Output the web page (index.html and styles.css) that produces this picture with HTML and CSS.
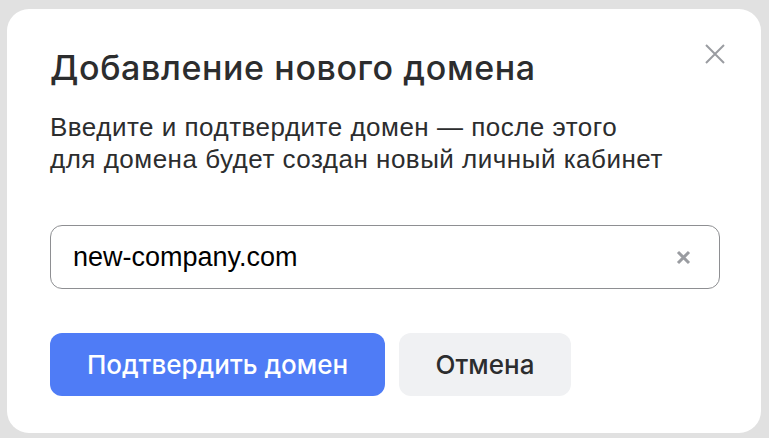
FILE: index.html
```html
<!DOCTYPE html>
<html lang="ru">
<head>
<meta charset="utf-8">
<link rel="stylesheet" href="styles.css">
</head>
<body>
<div class="modal">
  <button class="close" aria-label="Закрыть">
    <svg width="22" height="22" viewBox="0 0 22 22"><path d="M2 2L20 20M20 2L2 20" stroke="#9a9ca1" stroke-width="2" fill="none"/></svg>
  </button>
  <h1 class="title">Добавление нового домена</h1>
  <p class="desc">Введите и подтвердите домен — после этого<br>для домена будет создан новый личный кабинет</p>
  <div class="field">
    <span class="value">new-company.com</span>
    <svg class="clear" width="15" height="15" viewBox="0 0 15 15"><path d="M2 2L13 13M13 2L2 13" stroke="#9a9ca1" stroke-width="3" fill="none"/></svg>
  </div>
  <div class="actions">
    <button class="btn primary">Подтвердить домен</button>
    <button class="btn secondary">Отмена</button>
  </div>
</div>
</body>
</html>
```
FILE: styles.css
```css
html, body { margin: 0; padding: 0; }
body {
  background: #e1e1e1;
  padding: 9px 8px 5px 7px;
  width: 769px;
  height: 438px;
  box-sizing: border-box;
}
.modal {
  position: relative;
  background: #fff;
  border-radius: 22px;
  width: 754px;
  height: 424px;
  box-sizing: border-box;
  padding: 39px 43px 0 43px;
}
.close {
  position: absolute;
  top: 34px;
  right: 35px;
  background: none;
  border: 0;
  padding: 0;
  width: 22px;
  height: 22px;
}
.close svg { display: block; }
.title {
  margin: 0;
  font-family: Inter, "Noto Sans", sans-serif;
  font-weight: 500;
  font-size: 34px;
  line-height: 40px;
  color: #2c2d2e;
  letter-spacing: 0.6px;
}
.desc {
  margin: 23px 0 0 0;
  font-family: "Liberation Sans", Arial, sans-serif;
  font-size: 26px;
  line-height: 32px;
  color: #2c2d2e;
  letter-spacing: 0.5px;
}
.field {
  margin-top: 50px;
  width: 670px;
  height: 64px;
  box-sizing: border-box;
  border: 1px solid #8e8f92;
  border-radius: 12px;
  display: flex;
  align-items: center;
  justify-content: space-between;
  padding: 0 28px 0 22px;
}
.clear { display: block; }
.value {
  font-family: "Liberation Sans", Arial, sans-serif;
  font-size: 27px;
  color: #000;
}
.actions {
  margin-top: 44px;
  display: flex;
  gap: 14px;
}
.btn {
  height: 63px;
  border: 0;
  border-radius: 12px;
  font-family: Inter, "Noto Sans", sans-serif;
  font-size: 26px;
  font-weight: 500;
  padding: 0;
}
.primary {
  width: 335px;
  background: #4f7cf6;
  color: #fff;
}
.secondary {
  width: 172px;
  background: #f0f1f3;
  color: #2c2d2e;
}
```
